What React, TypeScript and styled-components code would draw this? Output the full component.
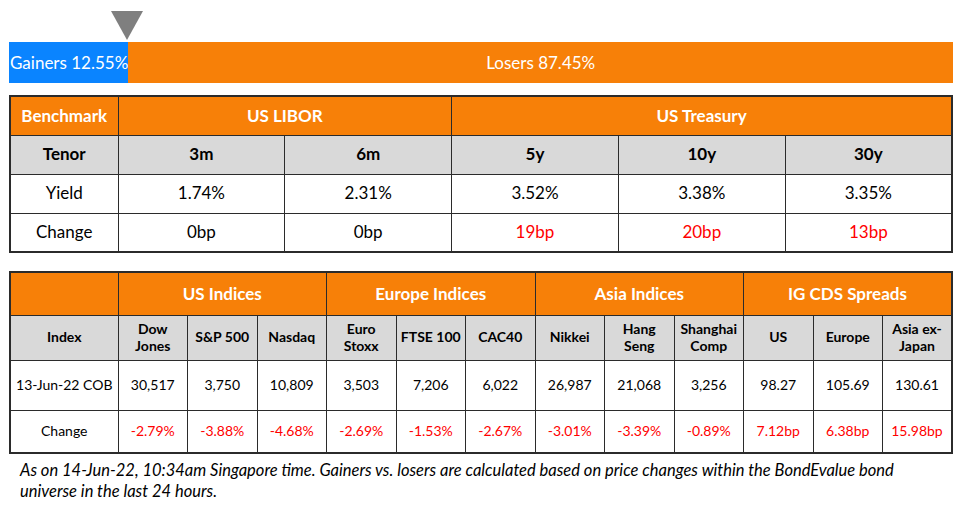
import React from "react";
import styled, { createGlobalStyle } from "styled-components";

const Global = createGlobalStyle`
  html, body { margin: 0; padding: 0; background: #fff; }
  body { font-family: Lato, "Open Sans", sans-serif; color: #000; }
`;

const ORANGE = "#f78008";
const BORDER = "#2b2b2b";

const Page = styled.div`
  width: 962px;
  padding: 11px 9px 0 9px;
  box-sizing: border-box;
`;

const MarkerRow = styled.div`
  position: relative;
  height: 31px;
`;

const Marker = styled.div`
  position: absolute;
  top: 0;
  width: 0;
  height: 0;
  margin-left: -16px;
  border-left: 16px solid transparent;
  border-right: 16px solid transparent;
  border-top: 29px solid #7f7f7f;
`;

const Bar = styled.div`
  display: flex;
  height: 41px;
  width: 944px;
`;

const Segment = styled.div<{ $bg: string; $align: string }>`
  background: ${(p) => p.$bg};
  color: #fff;
  display: flex;
  align-items: center;
  justify-content: ${(p) => p.$align};
  font-size: 17px;
  white-space: nowrap;
  overflow: hidden;
  padding-left: ${(p) => (p.$align === "flex-start" ? "1px" : "0")};
`;

const Table = styled.table<{ $top: number }>`
  border-collapse: collapse;
  width: 944px;
  margin-top: ${(p) => p.$top}px;
  table-layout: fixed;
  border: 2px solid ${BORDER};
`;

const Cell = styled.td<{ $kind: "head" | "sub" | "body"; $red?: boolean; $h: number; $size: number }>`
  border: 1.5px solid ${BORDER};
  height: ${(p) => p.$h}px;
  padding: 0 2px;
  text-align: center;
  vertical-align: middle;
  font-size: ${(p) => p.$size}px;
  line-height: 1.2;
  box-sizing: border-box;
  white-space: nowrap;
  background: ${(p) => (p.$kind === "head" ? ORANGE : p.$kind === "sub" ? "#d9d9d9" : "#fff")};
  color: ${(p) => (p.$kind === "head" ? "#fff" : p.$red ? "#ff0000" : "#000")};
  font-weight: ${(p) => (p.$kind === "body" ? 400 : 700)};
`;

const Note = styled.p`
  margin: 6px 0 0 11px;
  font-style: italic;
  font-size: 16.5px;
  line-height: 21px;
  color: #000;
  width: 905px;
`;

const gainers = 12.55;

const t1Cols = ["3m", "6m", "5y", "10y", "30y"];
const t1Yield = ["1.74%", "2.31%", "3.52%", "3.38%", "3.35%"];
const t1Change = ["0bp", "0bp", "19bp", "20bp", "13bp"];

const groups = ["US Indices", "Europe Indices", "Asia Indices", "IG CDS Spreads"];
const subHeads: React.ReactNode[] = [
  <>Dow<br />Jones</>, "S&P 500", "Nasdaq",
  <>Euro<br />Stoxx</>, "FTSE 100", "CAC40",
  "Nikkei", <>Hang<br />Seng</>, <>Shanghai<br />Comp</>,
  "US", "Europe", <>Asia ex-<br />Japan</>,
];
const values = ["30,517", "3,750", "10,809", "3,503", "7,206", "6,022", "26,987", "21,068", "3,256", "98.27", "105.69", "130.61"];
const changes = ["-2.79%", "-3.88%", "-4.68%", "-2.69%", "-1.53%", "-2.67%", "-3.01%", "-3.39%", "-0.89%", "7.12bp", "6.38bp", "15.98bp"];

const T1 = 39;
const S1 = 17;
const S2 = 14;

export default function App() {
  return (
    <Page>
      <Global />
      <MarkerRow>
        <Marker style={{ left: `${gainers}%` }} />
      </MarkerRow>
      <Bar>
        <Segment $bg="#0a84ff" $align="flex-start" style={{ width: `${gainers}%` }}>
          Gainers 12.55%
        </Segment>
        <Segment $bg={ORANGE} $align="center" style={{ flex: 1 }}>
          Losers 87.45%
        </Segment>
      </Bar>

      <Table $top={12}>
        <colgroup>
          <col style={{ width: 108 }} />
          {t1Cols.map((c) => <col key={c} />)}
        </colgroup>
        <tbody>
          <tr>
            <Cell $kind="head" $h={T1} $size={S1}>Benchmark</Cell>
            <Cell $kind="head" $h={T1} $size={S1} colSpan={2}>US LIBOR</Cell>
            <Cell $kind="head" $h={T1} $size={S1} colSpan={3}>US Treasury</Cell>
          </tr>
          <tr>
            <Cell $kind="sub" $h={T1} $size={S1}>Tenor</Cell>
            {t1Cols.map((c) => <Cell key={c} $kind="sub" $h={T1} $size={S1}>{c}</Cell>)}
          </tr>
          <tr>
            <Cell $kind="body" $h={T1} $size={S1}>Yield</Cell>
            {t1Yield.map((c, i) => <Cell key={i} $kind="body" $h={T1} $size={S1}>{c}</Cell>)}
          </tr>
          <tr>
            <Cell $kind="body" $h={T1} $size={S1}>Change</Cell>
            {t1Change.map((c, i) => <Cell key={i} $kind="body" $h={T1} $size={S1} $red={i >= 2}>{c}</Cell>)}
          </tr>
        </tbody>
      </Table>

      <Table $top={18}>
        <colgroup>
          <col style={{ width: 108 }} />
          {values.map((_, i) => <col key={i} />)}
        </colgroup>
        <tbody>
          <tr>
            <Cell $kind="head" $h={43} $size={S1} />
            {groups.map((g) => <Cell key={g} $kind="head" $h={43} $size={S1} colSpan={3}>{g}</Cell>)}
          </tr>
          <tr>
            <Cell $kind="sub" $h={45} $size={S2}>Index</Cell>
            {subHeads.map((s, i) => <Cell key={i} $kind="sub" $h={45} $size={S2}>{s}</Cell>)}
          </tr>
          <tr>
            <Cell $kind="body" $h={50} $size={S2}>13-Jun-22 COB</Cell>
            {values.map((v, i) => <Cell key={i} $kind="body" $h={50} $size={S2}>{v}</Cell>)}
          </tr>
          <tr>
            <Cell $kind="body" $h={43} $size={S2}>Change</Cell>
            {changes.map((v, i) => <Cell key={i} $kind="body" $h={43} $size={S2} $red>{v}</Cell>)}
          </tr>
        </tbody>
      </Table>

      <Note>
        As on 14-Jun-22, 10:34am Singapore time. Gainers vs. losers are calculated based on price changes within the BondEvalue bond universe in the last 24 hours.
      </Note>
    </Page>
  );
}
